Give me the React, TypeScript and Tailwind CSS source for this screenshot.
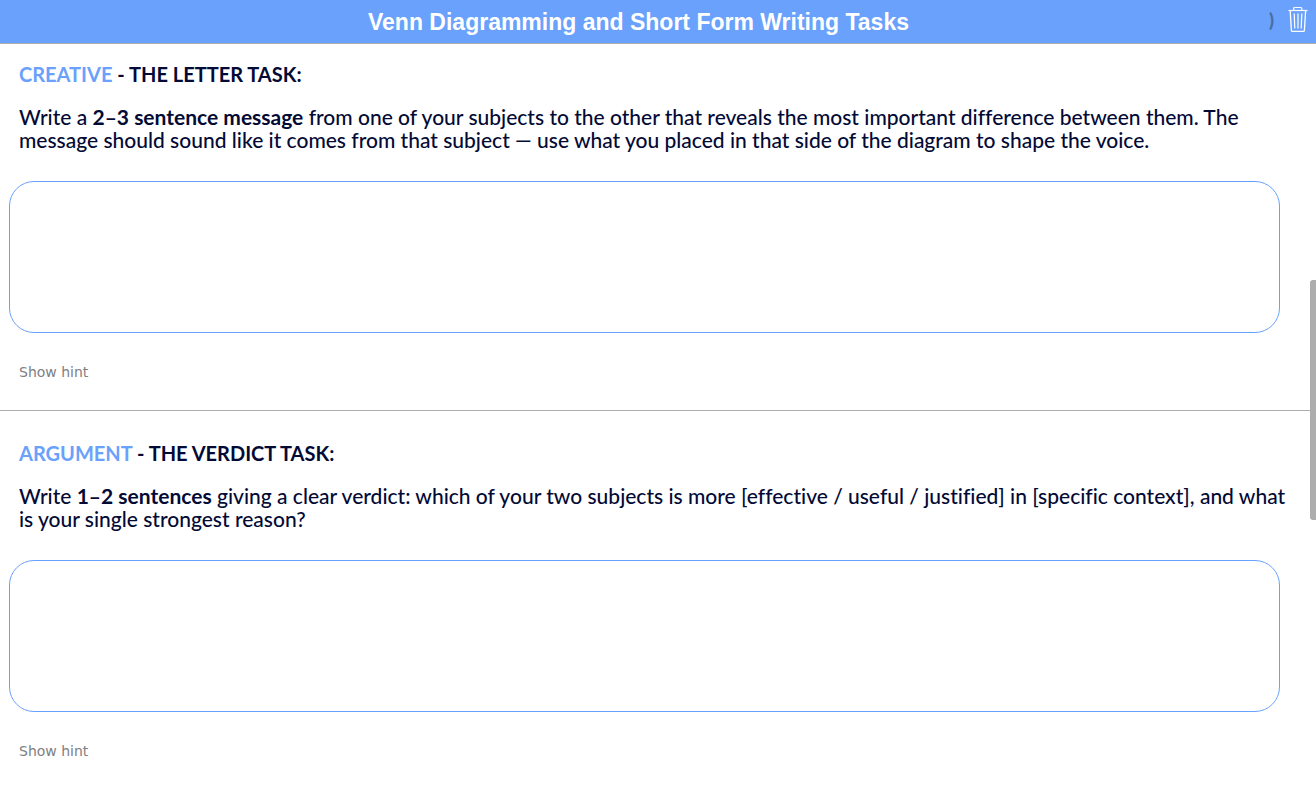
import type { ReactNode } from 'react'

type Task = {
  id: string
  kind: string
  title: string
  prompt: ReactNode
}

const TASKS: Task[] = [
  {
    id: 'letter',
    kind: 'CREATIVE',
    title: 'THE LETTER TASK:',
    prompt: (
      <>
        Write a <strong className="font-bold">2–3 sentence message</strong> from one of your subjects to the other
        that reveals the most important difference between them. The message should sound like it comes from that
        subject — use what you placed in that side of the diagram to shape the voice.
      </>
    ),
  },
  {
    id: 'verdict',
    kind: 'ARGUMENT',
    title: 'THE VERDICT TASK:',
    prompt: (
      <>
        Write <strong className="font-bold">1–2 sentences</strong> giving a clear verdict: which of your two subjects
        is more [effective / useful / justified] in [specific context], and what is your single strongest reason?
      </>
    ),
  },
]

function TrashIcon() {
  return (
    <svg width="20" height="26" viewBox="0 0 20 26" fill="none" stroke="white" aria-hidden="true">
      <path d="M0.5 4.5H19.5" strokeWidth="1.2" />
      <path d="M5.7 4V2.5Q5.7 1.5 6.7 1.5H12.8Q13.8 1.5 13.8 2.5V4" strokeWidth="1.2" />
      <path d="M2.2 5L3.4 24.5Q3.5 25.4 4.4 25.4H15.4Q16.3 25.4 16.4 24.5L17.6 5" strokeWidth="1.3" />
      <path d="M6.2 7.5L6.8 22.5M10 7.5V22.5M13.8 7.5L13.2 22.5" strokeWidth="1.2" />
    </svg>
  )
}

function TaskSection({ task }: { task: Task }) {
  return (
    <section className="border-b border-[#adadad] pt-[31px] pb-7 first:pt-[19px]">
      <div className="pl-[19px] pr-6">
        <h2 id={`${task.id}-title`} className="text-[20px] leading-[23px] font-bold">
          <span className="text-[#69a1fc]">{task.kind}</span> - {task.title}
        </h2>
        <p
          id={`${task.id}-prompt`}
          className="mt-[19px] text-[21px] leading-[23px] font-medium [font-variant-ligatures:none]"
        >
          {task.prompt}
        </p>
      </div>
      <textarea
        aria-labelledby={`${task.id}-title`}
        aria-describedby={`${task.id}-prompt`}
        className="mt-[30px] ml-[9px] block h-[152px] w-[calc(100%-39px)] resize-none rounded-[25px] border border-[#69a1fc] bg-white px-5 py-4 text-[21px] leading-[23px] outline-none"
      />
      <button
        type="button"
        className="mt-[29px] ml-[19px] block font-['DejaVu_Sans',sans-serif] text-[14px] leading-5 text-[#808080]"
      >
        Show hint
      </button>
    </section>
  )
}

export default function App() {
  return (
    <div className="relative h-screen overflow-hidden bg-white font-['Lato',sans-serif] text-[#030a35]">
      <header className="flex h-11 items-center border-b border-[#adadad] bg-[#69a1fc] pr-2">
        <h1 className="flex-1 pl-2 text-center font-['Liberation_Sans',sans-serif] text-[23px] leading-7 font-bold text-white">
          Venn Diagramming and Short Form Writing Tasks
        </h1>
        <span className="mr-[14px] pb-1 text-[18px] leading-5 font-black text-[#4c6d9f]">)</span>
        <button type="button" aria-label="Clear all answers" className="block pb-[5px]">
          <TrashIcon />
        </button>
      </header>
      <main className="mr-[6px]">
        {TASKS.map((task) => (
          <TaskSection key={task.id} task={task} />
        ))}
      </main>
      <div className="absolute top-[280px] right-0 h-60 w-[6px] rounded-l-[3px] bg-[#adadad]" />
    </div>
  )
}
